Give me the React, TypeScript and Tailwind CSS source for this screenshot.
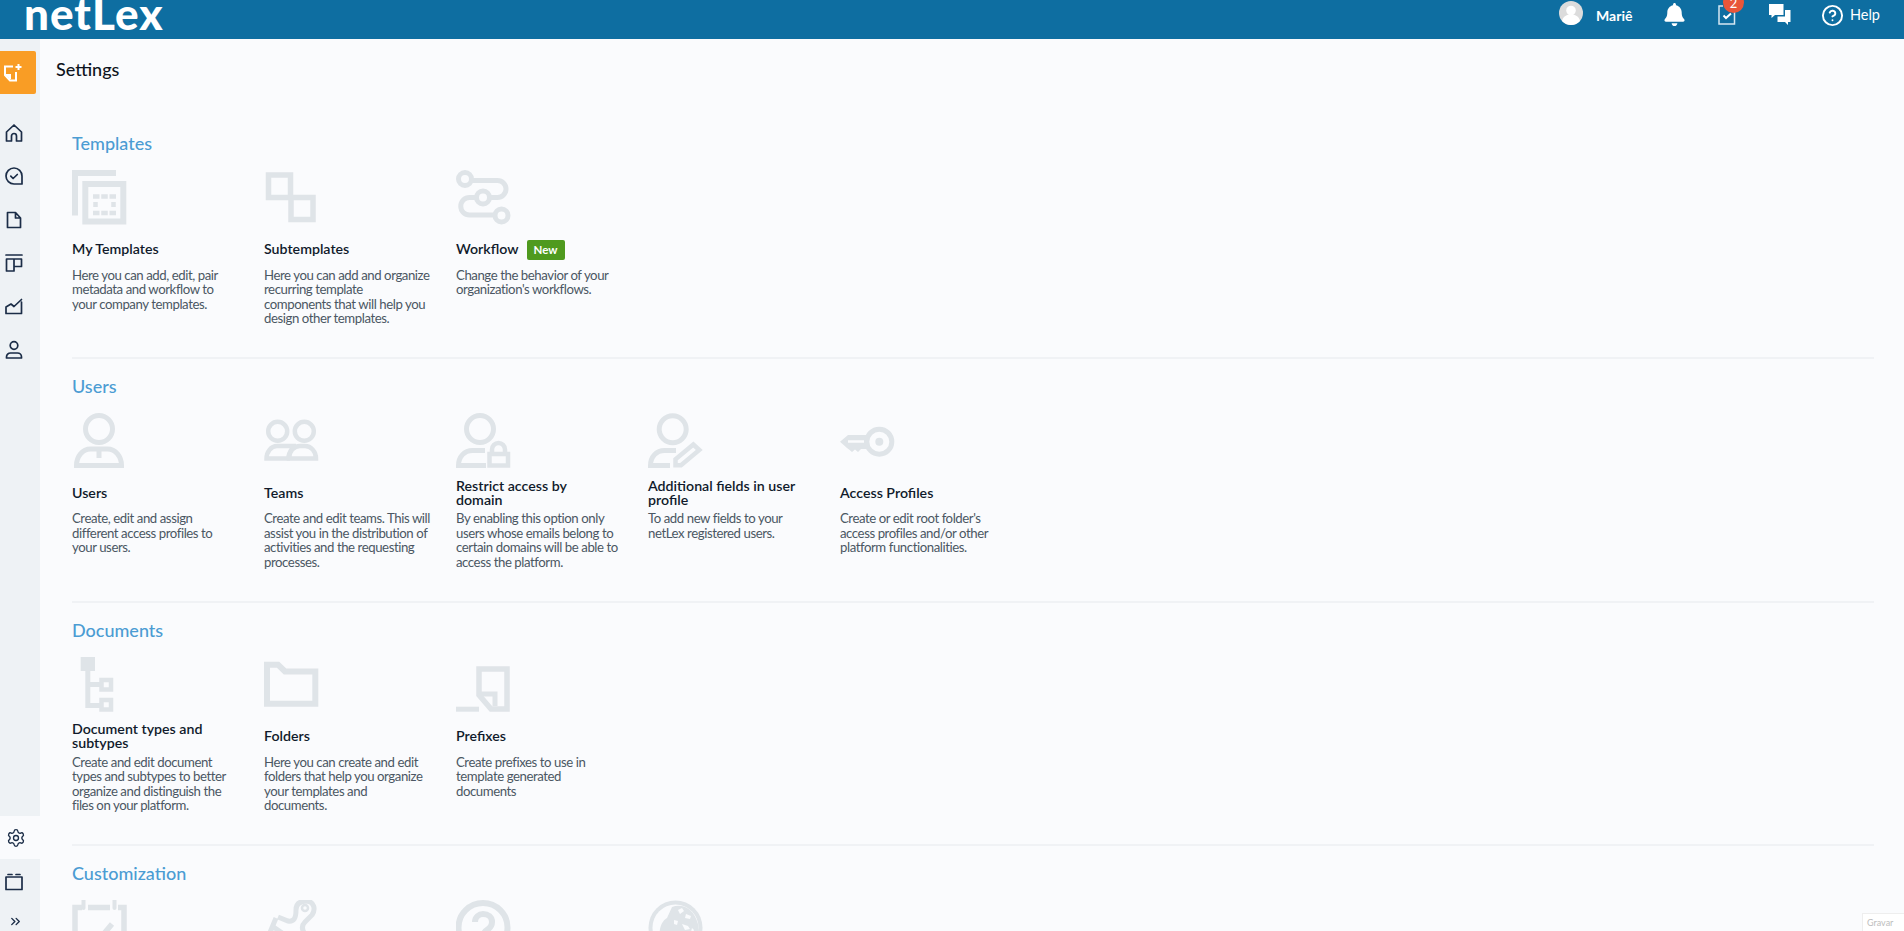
import React from "react";
import { FaBell } from "react-icons/fa";
import { Settings, ChevronsRight, CircleHelp } from "lucide-react";

const C = "#dfe4e8";
const BG = "#fafbfd";

function Ico({ children }: { children: React.ReactNode }) {
  return (
    <svg width="55" height="55" viewBox="0 0 55 55" fill="none" stroke={C} strokeWidth="5" className="block shrink-0">
      {children}
    </svg>
  );
}

const icons: Record<string, React.ReactNode> = {
  templates: (
    <Ico>
      <path d="M44 3H3V45.500" strokeWidth="6" />
      <rect x="13.300" y="14" width="38" height="37.500" strokeWidth="6" />
      <path d="M21 26.500h23M21 43h23M23.500 32v5M41.500 32v5" strokeWidth="4.500" strokeDasharray="6.500 1.750" />
    </Ico>
  ),
  sub: (
    <Ico>
      <rect x="4.500" y="5" width="22" height="22.500" strokeWidth="5.500" />
      <rect x="27" y="27.500" width="22" height="22" strokeWidth="5.500" />
    </Ico>
  ),
  flow: (
    <Ico>
      <circle cx="9" cy="9" r="6.500" />
      <circle cx="27" cy="27.500" r="6.500" />
      <circle cx="45.500" cy="45.500" r="6.500" />
      <path d="M15 10.500H41.500a8.500 8.500 0 0 1 0 17H33M21 27.500H13.500a8.750 8.750 0 0 0 0 17.500H39" />
    </Ico>
  ),
  user: (
    <Ico>
      <circle cx="27" cy="16" r="13.500" />
      <path d="M4.500 52.500h45c0-9-6-16.500-14-16.500h-17c-8 0-14 7.500-14 16.500ZM27 36v9" />
    </Ico>
  ),
  teams: (
    <Ico>
      <circle cx="13.700" cy="18.300" r="9.500" strokeWidth="4.500" />
      <circle cx="40.300" cy="18.300" r="9.500" strokeWidth="4.500" />
      <path d="M2.500 45.500H24c1-6 4-11 8-12.500H13c-6 0-10.500 6-10.500 12.500Z" strokeWidth="4.500" />
      <path d="M25 45.500h27c0-7-5-12.500-11-12.500H36c-6 0-11 5.500-11 12.500Z" strokeWidth="4.500" />
    </Ico>
  ),
  lock: (
    <Ico>
      <circle cx="24" cy="16" r="13.500" />
      <path d="M2.500 55v-2.500c0-9 6-15 14-15H29M2.500 52.500H30" />
      <rect x="33.500" y="41" width="18.500" height="11.500" strokeWidth="4.500" />
      <path d="M36 41v-4.500a6.500 6.500 0 0 1 13 0V41" strokeWidth="4.500" />
    </Ico>
  ),
  edit: (
    <Ico>
      <circle cx="24.700" cy="16.300" r="13.500" />
      <path d="M2.500 55v-2.500c0-9 6-15 14-15H28M2.500 52.500H22" />
      <path d="M45.300 31.500l6 5.500L33 52.300h-5.500V46.300Z" strokeWidth="4.500" />
    </Ico>
  ),
  key: (
    <Ico>
      <circle cx="39.300" cy="28.700" r="12.500" />
      <circle cx="39.300" cy="28.700" r="4" fill={C} stroke="none" />
      <path d="M0 28.700L8 22H27V36H21L18 39L15 36.500L12 39L9 36.500L7 35Z" fill={C} stroke="none" />
      <path d="M8 28.500H24" stroke={BG} strokeWidth="2.500" />
    </Ico>
  ),
  tree: (
    <Ico>
      <rect x="8.700" y="0" width="14.300" height="14" fill={C} stroke="none" />
      <path d="M15.800 12V48.500H28M15.800 27.500H28" />
      <rect x="29.500" y="23" width="9.500" height="9.500" strokeWidth="4.500" />
      <rect x="29.500" y="43" width="9.500" height="9.500" strokeWidth="4.500" />
    </Ico>
  ),
  folder: (
    <Ico>
      <path d="M3 7.700H14L21 14.500H51.300V46.700H3Z" strokeWidth="6" />
    </Ico>
  ),
  prefix: (
    <Ico>
      <path d="M0 52.200H23" />
      <path d="M23 12H51V52H35L23 38Z" strokeWidth="5.500" />
      <path d="M23 37H39V49" strokeWidth="5" />
    </Ico>
  ),
  cal: (
    <Ico>
      <path d="M10 7.500H3V60M52 60V7.500H46M16 7.500H38" strokeWidth="5.500" />
      <path d="M11.500 0v8M42.500 0v8" strokeWidth="4" strokeLinecap="round" />
      <path d="M19 36l6 6L40 24" strokeWidth="5.500" />
    </Ico>
  ),
  brush: (
    <Ico>
      <circle cx="41" cy="8" r="3" strokeWidth="2.500" />
      <path d="M14 17L24 21C30 22 32 18 32 10C32 3 37 1 43 1C50 2 52 9 48 15L41 22C37 26 38 30 41 34M12 18L2 42M8 26L34 44" strokeWidth="5" />
    </Ico>
  ),
  help: (
    <Ico>
      <circle cx="27" cy="27.500" r="24.500" strokeWidth="6" />
      <path d="M19 22c0-5 4-8 8-8 5 0 9 3 9 8 0 4-2 6-5 8-3 2-4 4-4 8" strokeWidth="6" />
    </Ico>
  ),
  globe: (
    <Ico>
      <circle cx="27.500" cy="27.500" r="27" fill={C} stroke="none" />
      <circle cx="27.500" cy="27.500" r="23" fill={BG} stroke="none" />
      <path d="M14 48C9 34 12 22 19 18L24 7C34 3 46 8 50 24L52 40C44 52 26 54 14 48Z" fill={C} stroke="none" />
      <path d="M30 10l4-2 2 3-4 3ZM38 14l5 2-1 3-5-1ZM26 20l4 1-1 4-3-1ZM34 24l6 2 2 3-5 1ZM44 28l2 2-2 5-1-3Z" fill={BG} stroke="none" />
    </Ico>
  ),
};

type Item = { icon: string; title: string; desc: string; badge?: boolean };
const sections: { name: string; items: Item[] }[] = [
  {
    name: "Templates",
    items: [
      { icon: "templates", title: "My Templates", desc: "Here you can add, edit, pair metadata and workflow to your company templates." },
      { icon: "sub", title: "Subtemplates", desc: "Here you can add and organize recurring template components that will help you design other templates." },
      { icon: "flow", title: "Workflow", badge: true, desc: "Change the behavior of your organization's workflows." },
    ],
  },
  {
    name: "Users",
    items: [
      { icon: "user", title: "Users", desc: "Create, edit and assign different access profiles to your users." },
      { icon: "teams", title: "Teams", desc: "Create and edit teams. This will assist you in the distribution of activities and the requesting processes." },
      { icon: "lock", title: "Restrict access by domain", desc: "By enabling this option only users whose emails belong to certain domains will be able to access the platform." },
      { icon: "edit", title: "Additional fields in user profile", desc: "To add new fields to your netLex registered users." },
      { icon: "key", title: "Access Profiles", desc: "Create or edit root folder's access profiles and/or other platform functionalities." },
    ],
  },
  {
    name: "Documents",
    items: [
      { icon: "tree", title: "Document types and subtypes", desc: "Create and edit document types and subtypes to better organize and distinguish the files on your platform." },
      { icon: "folder", title: "Folders", desc: "Here you can create and edit folders that help you organize your templates and documents." },
      { icon: "prefix", title: "Prefixes", desc: "Create prefixes to use in template generated documents" },
    ],
  },
  {
    name: "Customization",
    items: [
      { icon: "cal", title: "", desc: "" },
      { icon: "brush", title: "", desc: "" },
      { icon: "help", title: "", desc: "" },
      { icon: "globe", title: "", desc: "" },
    ],
  },
];

function Card({ item }: { item: Item }) {
  return (
    <div className="w-[192px] shrink-0">
      {icons[item.icon]}
      <div className="mt-[10px] h-[29px] flex items-center gap-2 w-[152px]">
        <h3 className="text-[14.200px] leading-[14.300px] font-semibold text-[#101a2b]">{item.title}</h3>
        {item.badge && (
          <span className="h-5 w-[38px] shrink-0 rounded-[2px] bg-[#4f9a1f] text-white text-[11.500px] font-bold flex items-center justify-center">New</span>
        )}
      </div>
      <p className="mt-[3.750px] w-[167px] text-[13.200px] leading-[14.500px] text-[#4b5763] tracking-[-0.430px]">{item.desc}</p>
    </div>
  );
}

const side = "#1b2d47";
function SideIcon({ children, w = 20 }: { children: React.ReactNode; w?: number }) {
  return (
    <svg width={w} height={w} viewBox="0 0 20 20" fill="none" stroke={side} strokeWidth="1.700" strokeLinejoin="round" strokeLinecap="round">
      {children}
    </svg>
  );
}

function Sidebar() {
  return (
    <aside className="w-10 shrink-0 bg-[#eef2f5] flex flex-col">
      <div className="mt-3 h-[43px] w-9 rounded-r-[2px] bg-[#f99d25] flex items-center pl-[3px]">
        <svg width="20" height="20" viewBox="0 0 20 20" fill="none" stroke="#fff" strokeWidth="2">
          <path d="M10 3.500H2V12L7 17.500H13V9" />
          <path d="M2.500 12H7V16" fill="#fff" />
          <path d="M15.500 1v6M12.500 4h6" />
        </svg>
      </div>
      <div className="mt-[17.500px] flex flex-col pl-[4px]">
        <div className="h-[43.300px] flex items-center">
          <SideIcon><path d="M2.500 18V9L10 2l7.500 7v9h-5v-5a2.500 2.500 0 0 0-5 0v5Z" /></SideIcon>
        </div>
        <div className="h-[43.300px] flex items-center">
          <SideIcon><path d="M18 18H10a8 8 0 1 1 8-8ZM6.800 10.200l2.300 2.300 4.200-4" /></SideIcon>
        </div>
        <div className="h-[43.300px] flex items-center">
          <SideIcon><path d="M3.500 2.500h8l5 5.500v9.500h-13ZM11.500 3v5h5" /></SideIcon>
        </div>
        <div className="h-[43.300px] flex items-center">
          <SideIcon><path d="M2 2h16M2.500 6h15v7.500H10V18H2.500ZM10 6v8" /></SideIcon>
        </div>
        <div className="h-[43.300px] flex items-center">
          <SideIcon><path d="M2 11l5-3 3 2.500L17.500 3.500M2 11v6.500h15.500V6" /></SideIcon>
        </div>
        <div className="h-[43.300px] flex items-center">
          <SideIcon><circle cx="10" cy="5.500" r="3.800" /><path d="M2.500 18v-1a4 4 0 0 1 4-4h7a4 4 0 0 1 4 4v1Z" /></SideIcon>
        </div>
      </div>
      <div className="mt-auto">
        <div className="h-[43px] bg-[#fafbfd] flex items-center pl-[6px]">
          <Settings size={20} color={side} strokeWidth={1.600} />
        </div>
        <div className="h-[43px] flex items-center pl-[4px]">
          <SideIcon><rect x="2" y="6" width="16" height="12.500" /><path d="M4 3.500h4M12 3.500h4" /></SideIcon>
        </div>
        <div className="h-[29px] pb-[2px] flex items-end pl-[8px]">
          <ChevronsRight size={15} color={side} strokeWidth={2.200} />
        </div>
      </div>
    </aside>
  );
}

function Header() {
  return (
    <header className="h-[39px] shrink-0 bg-[#0e6ea1] flex items-center overflow-hidden relative font-['Lato',sans-serif] text-white">
      <div className="ml-[24px] text-[44px] leading-[39px] font-black tracking-[1px] mt-[-13px]">netLex</div>
      <div className="ml-auto self-start flex items-center h-[30px] pr-[24px]">
        <svg width="24" height="24" viewBox="0 0 24 24" className="mt-[-4.600px]">
          <circle cx="12" cy="12" r="12" fill="#dcdcdc" />
          <circle cx="12" cy="9.500" r="4.800" fill="#fff" />
          <path d="M3 20c1-5 5-6.500 9-6.500s8 1.500 9 6.500c-2.500 2.500-5.500 4-9 4s-6.500-1.500-9-4Z" fill="#fff" />
        </svg>
        <span className="ml-[13px] text-[14px] font-bold">Mariê</span>
        <FaBell size={23} className="ml-[31px] mt-[-2px]" />
        <div className="relative ml-[31px] mt-[-1px]">
          <svg width="20" height="21" viewBox="0 0 20 21" fill="none" stroke="#d6e8f2" strokeWidth="1.500">
            <path d="M6 2H2v18h15.500V2H14" />
            <path d="M6.500 11.500l2.500 2.500 5-4.500" stroke="#fff" strokeWidth="2" />
          </svg>
          <span className="absolute left-[5.500px] top-[-12.500px] size-[21px] rounded-full bg-[#e8563a] text-white text-[13px] leading-[23px] text-center">2</span>
        </div>
        <svg width="22" height="21" viewBox="0 0 22 21" fill="#fff" className="ml-[32px] mt-[-2px]">
          <path d="M0 0h14.500v11H6L2.500 14v-3H0Z" />
          <path d="M8.500 12.500H16V6h5.500v12h-2.500v3L16 18H8.500Z" />
        </svg>
        <CircleHelp size={23} strokeWidth={2} className="ml-[29.500px]" />
        <span className="ml-[6px] text-[14.500px]">Help</span>
      </div>
    </header>
  );
}

export default function App() {
  return (
    <div className="h-screen overflow-hidden flex flex-col bg-[#fafbfd] font-['Lato',sans-serif] relative">
      <Header />
      <div className="flex-1 flex min-h-0">
        <Sidebar />
        <main className="flex-1 min-w-0 overflow-hidden">
          <div className="h-[60px] flex items-center pl-4 text-[18px] font-medium text-[#0e1420]">Settings</div>
          <div className="pl-8 pr-[30px] pt-[32.600px]">
            {sections.map((s, i) => (
              <section key={s.name} className={i < sections.length - 1 ? "border-b-2 border-[#f0f2f5] pb-[31.600px] mb-[15.500px]" : ""}>
                <h2 className="h-6 flex items-center text-[18px] font-medium text-[#4b9cd3]">{s.name}</h2>
                <div className="mt-[14.500px] flex">
                  {s.items.map((it) => (
                    <Card key={it.icon} item={it} />
                  ))}
                </div>
              </section>
            ))}
          </div>
        </main>
      </div>
      <div className="absolute right-0 bottom-0 w-[42px] h-[18px] bg-white border-l border-t border-[#eeeeee] text-[9px] text-[#bdbdbd] pl-[4px] leading-[18px]">Gravar</div>
    </div>
  );
}
